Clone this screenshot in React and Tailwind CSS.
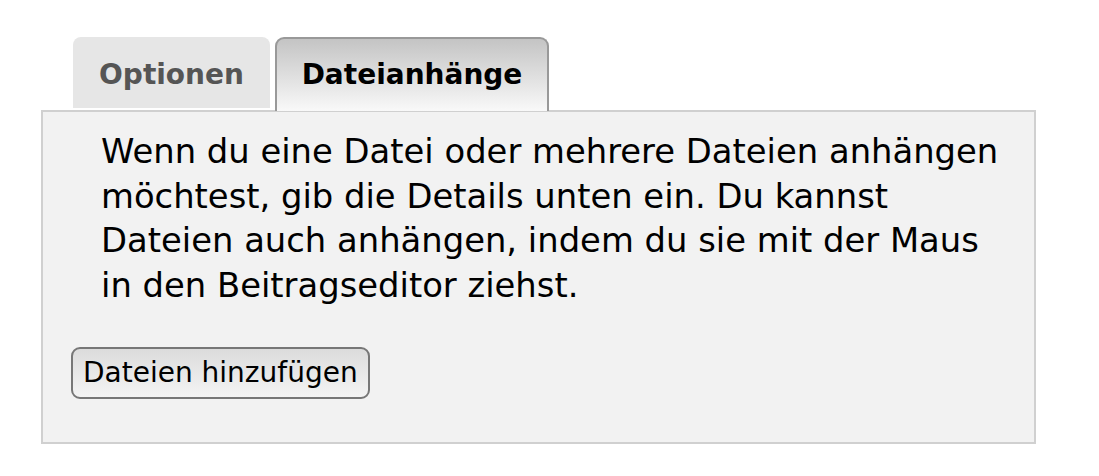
import React from 'react';

const font = { fontFamily: '"DejaVu Sans", Verdana, sans-serif' };

const App = () => {
  return (
    <div className="w-[1099px] h-[476px] bg-white pt-[36px] pl-[41px]" style={font}>
      {/* Tabs */}
      <div className="flex items-end gap-[5px] pl-[32px] h-[74px]">
        <div className="h-[71px] w-[197px] mb-[2px] rounded-t-[8px] bg-[#e6e6e6] flex items-center justify-center pt-[4px] text-[28px] font-bold text-[#555]">
          Optionen
        </div>
        <div className="h-[74px] w-[274px] -mb-[1px] rounded-t-[9px] border-2 border-b-0 border-[#999] bg-gradient-to-b from-[#c4c4c4] to-[#f9f9f9] flex items-center justify-center text-[28px] font-bold text-black relative z-10">
          Dateianhänge
        </div>
      </div>

      {/* Panel */}
      <div className="w-[995px] h-[334px] border-2 border-[#d0d0d0] bg-[#f2f2f2] pt-[18px]">
        <p className="pl-[58px] pr-[26px] text-[33.8px] leading-[44.6px] text-black">
          Wenn du eine Datei oder mehrere Dateien anhängen möchtest, gib die Details unten ein. Du kannst
          Dateien auch anhängen, indem du sie mit der Maus in den Beitragseditor ziehst.
        </p>
        <div className="pl-[28px] mt-[39px]">
          <button className="h-[52px] px-[10px] rounded-[9px] border-2 border-[#777] bg-gradient-to-b from-[#dcdcdc] to-[#f4f4f4] text-[28px] text-black">
            Dateien hinzufügen
          </button>
        </div>
      </div>
    </div>
  );
};

export default App;
